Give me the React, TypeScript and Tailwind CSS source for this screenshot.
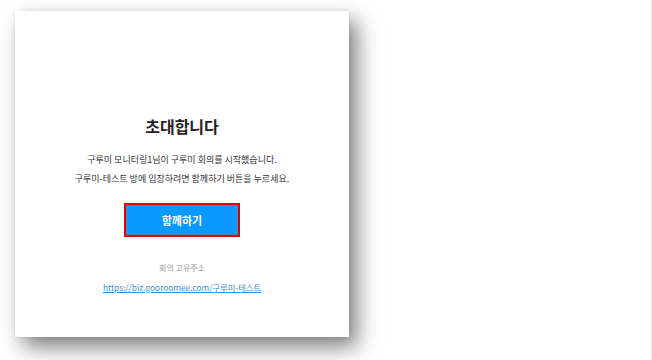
import React from "react";

export default function App() {
  return (
    <div
      className="w-[652px] h-[360px] bg-white overflow-hidden relative"
      style={{ fontFamily: '"Noto Sans CJK KR", "Noto Sans", sans-serif' }}
    >
      <div className="absolute right-0 top-0 h-full w-px bg-[#e6e6e6]" />
      <div className="pl-[15px] pt-[11px]">
        <div className="w-[334px] h-[326px] bg-white shadow-[8px_10px_20px_rgba(0,0,0,0.5),0_0_4px_rgba(0,0,0,0.08)] flex flex-col items-center">
          <div className="mt-[103px] text-[16px] leading-[24px] font-bold text-[#222]">초대합니다</div>
          <div className="mt-[12px] text-[9px] leading-[19px] text-[#333] text-center">
            <div>구루미 모니터링1님이 구루미 회의를 시작했습니다.</div>
            <div>구루미-테스트 방에 입장하려면 함께하기 버튼을 누르세요.</div>
          </div>
          <div className="mt-[15px] w-[116px] h-[34px] bg-[#e00000] p-[2px]">
            <div className="w-full h-full bg-[#0a99ff] border border-[#5a7fb0] flex items-center justify-center text-white text-[11px] font-bold">
              함께하기
            </div>
          </div>
          <div className="mt-[24px] text-[8px] leading-[14px] text-[#999]">회의 고유주소</div>
          <div className="mt-[5px] text-[8.3px] leading-[14px] text-[#3b8fd8] underline">
            https://biz.gooroomee.com/구루미-테스트
          </div>
        </div>
      </div>
    </div>
  );
}
